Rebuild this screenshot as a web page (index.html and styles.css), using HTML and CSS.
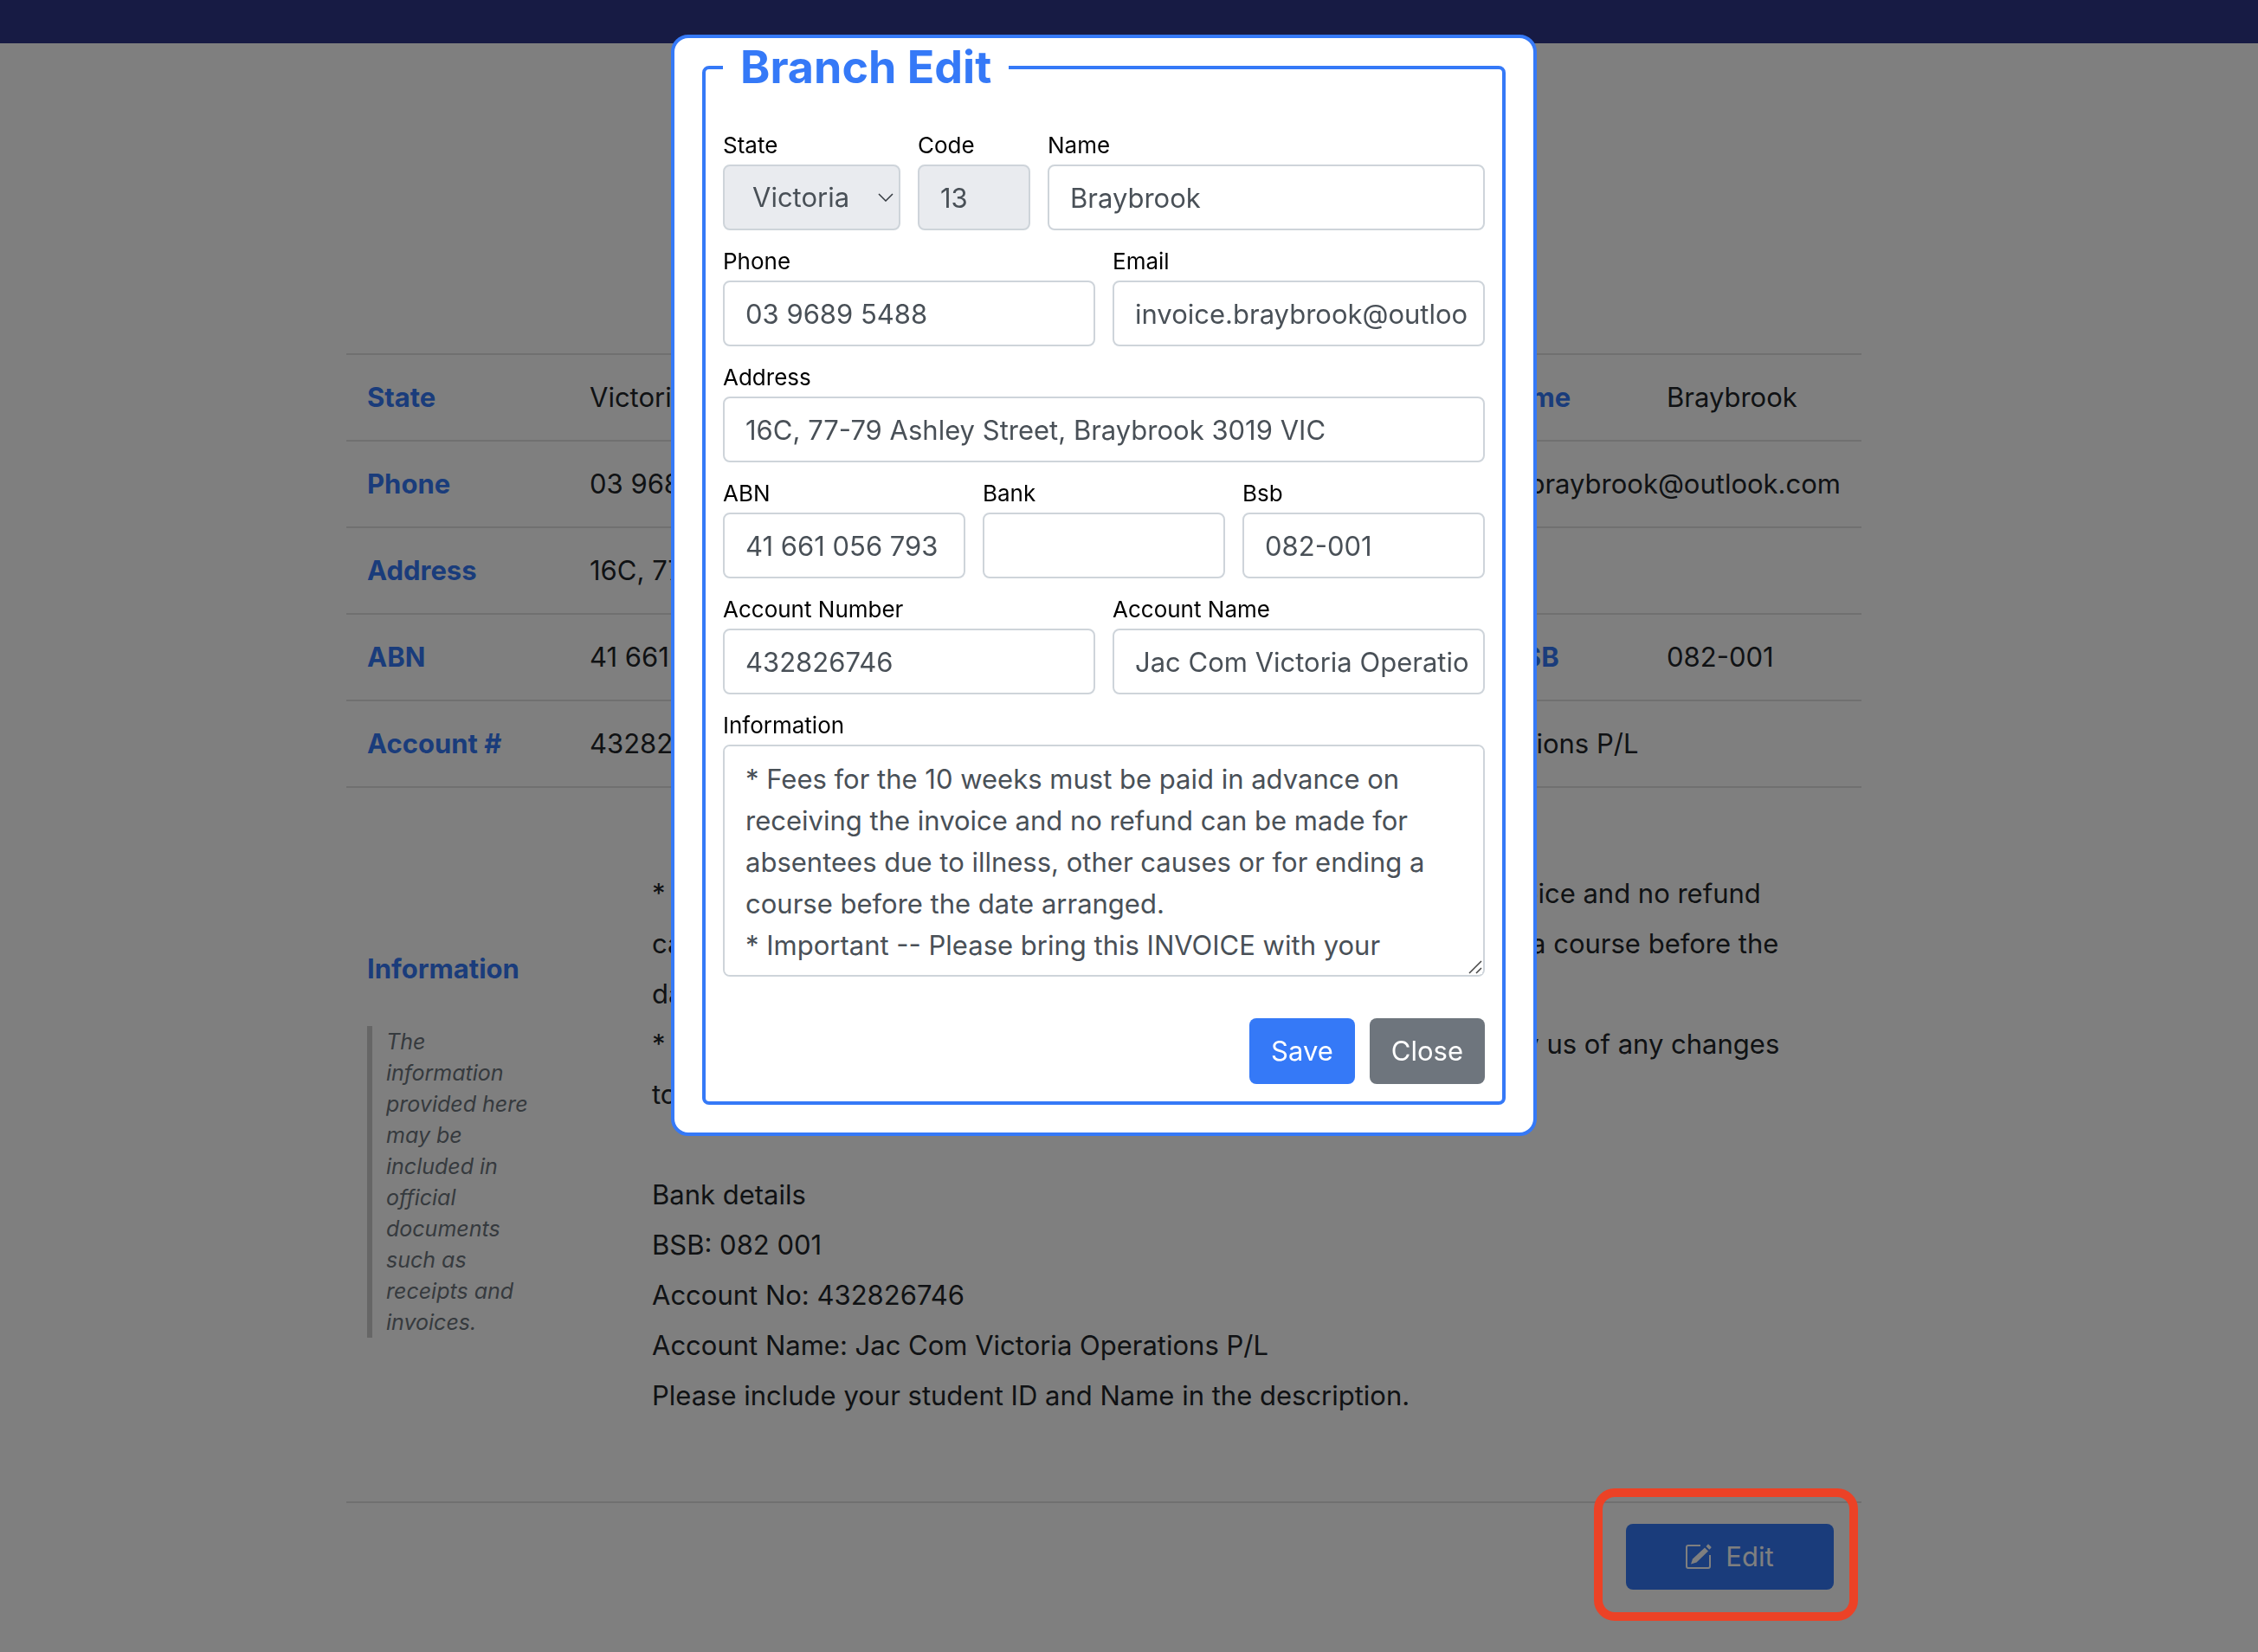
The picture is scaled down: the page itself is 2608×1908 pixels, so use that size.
FILE: index.html
```html
<!DOCTYPE html>
<html lang="en">
<head>
<meta charset="utf-8">
<title>Branch Edit</title>
<meta name="viewport" content="width=device-width, initial-scale=1">
<link rel="stylesheet" href="styles.css">
</head>
<body>
<header class="topbar"></header>
<main class="page">
  <div class="details">
    <table class="branch">
      <colgroup>
        <col class="col-label"><col class="col-wide"><col class="col-label"><col class="col-code"><col class="col-name"><col>
      </colgroup>
      <tbody>
        <tr><th scope="row">State</th><td>Victoria</td><th scope="row">Code</th><td>13</td><th scope="row" class="center">Name</th><td>Braybrook</td></tr>
        <tr><th scope="row">Phone</th><td>03 9689 5488</td><th scope="row">Email</th><td colspan="3" class="end">invoice.braybrook@outlook.com</td></tr>
        <tr><th scope="row">Address</th><td colspan="5">16C, 77-79 Ashley Street, Braybrook 3019 VIC</td></tr>
        <tr><th scope="row">ABN</th><td>41 661 056 793</td><th scope="row">Bank</th><td></td><th scope="row" class="center">BSB</th><td>082-001</td></tr>
        <tr><th scope="row">Account #</th><td>432826746</td><th scope="row">Account Name</th><td colspan="3">Jac Com Victoria Operations P/L</td></tr>
        <tr class="info-row">
          <th scope="row">Information
            <blockquote class="note">The information provided here may be included in official documents such as receipts and invoices.</blockquote>
          </th>
          <td colspan="5"><p class="info">* Fees for the 10 weeks must be paid in advance on receiving the invoice and no refund
can be made for absentees due to illness, other causes or for ending a course before the
date arranged.
* Important -- Please bring this INVOICE with your payment and notify us of any changes
to your details.

Bank details
BSB: 082 001
Account No: 432826746
Account Name: Jac Com Victoria Operations P/L
Please include your student ID and Name in the description.</p></td>
        </tr>
      </tbody>
    </table>
    <div class="actions">
      <div class="marked">
        <button type="button" class="btn btn-primary btn-edit">
          <svg class="icon" viewBox="0 0 30 30" aria-hidden="true"><path d="M17 2H3Q1 2 1 4V26Q1 28 3 28H26Q28 28 28 26V13" fill="none" stroke="currentColor" stroke-width="2"/><path d="M22 4.500L26 8.500L12.500 21.500L6 23.500L8 17.500Z" fill="currentColor"/><path d="M23.500 3L25.500 .8Q26 .3 26.500 .8L29.300 3.600Q29.800 4.200 29.300 4.700L27.300 6.800Z" fill="currentColor"/></svg>
          Edit
        </button>
        <span class="marker"></span>
      </div>
    </div>
  </div>
</main>
<div class="backdrop">
  <dialog open class="modal" aria-labelledby="modal-title">
    <form>
      <fieldset class="panel">
        <legend id="modal-title">Branch Edit</legend>
        <div class="rows">
          <div class="row row-head">
            <div class="field"><label for="state">State</label>
              <div class="select">
                <select id="state" disabled><option>Victoria</option></select>
                <svg class="chevron" viewBox="0 0 18 10" aria-hidden="true"><path d="M1 1L9 9L17 1" fill="none" stroke="currentColor" stroke-width="1.500"/></svg>
              </div>
            </div>
            <div class="field"><label for="code">Code</label><input id="code" type="text" value="13" disabled></div>
            <div class="field"><label for="name">Name</label><input id="name" type="text" value="Braybrook"></div>
          </div>
          <div class="row row-2">
            <div class="field"><label for="phone">Phone</label><input id="phone" type="text" value="03 9689 5488"></div>
            <div class="field"><label for="email">Email</label><input id="email" type="text" value="invoice.braybrook@outlook.com"></div>
          </div>
          <div class="row">
            <div class="field"><label for="address">Address</label><input id="address" type="text" value="16C, 77-79 Ashley Street, Braybrook 3019 VIC"></div>
          </div>
          <div class="row row-3">
            <div class="field"><label for="abn">ABN</label><input id="abn" type="text" value="41 661 056 793"></div>
            <div class="field"><label for="bank">Bank</label><input id="bank" type="text" value=""></div>
            <div class="field"><label for="bsb">Bsb</label><input id="bsb" type="text" value="082-001"></div>
          </div>
          <div class="row row-2">
            <div class="field"><label for="accno">Account Number</label><input id="accno" type="text" value="432826746"></div>
            <div class="field"><label for="accname">Account Name</label><input id="accname" type="text" value="Jac Com Victoria Operations P/L"></div>
          </div>
          <div class="row">
            <div class="field"><label for="info">Information</label>
              <div class="area">
                <textarea id="info" rows="5">* Fees for the 10 weeks must be paid in advance on receiving the invoice and no refund can be made for absentees due to illness, other causes or for ending a course before the date arranged.
* Important -- Please bring this INVOICE with your payment and notify us of any changes to your details.</textarea>
                <svg class="grip" viewBox="0 0 16 16" aria-hidden="true"><path d="M1 15L15 1M9 15L15 9" fill="none" stroke="currentColor" stroke-width="1.500"/></svg>
              </div>
            </div>
          </div>
        </div>
        <div class="buttons">
          <button type="button" class="btn btn-primary">Save</button>
          <button type="button" class="btn btn-secondary">Close</button>
        </div>
      </fieldset>
    </form>
  </dialog>
</div>
</body>
</html>
```
FILE: styles.css
```css
:root {
  --blue: #3579f7;
  --gray: #6e757d;
  --text: #212529;
  --line: #e0e0e0;
  --gutter: 58px;
}

* { box-sizing: border-box; }

body {
  margin: 0;
  min-height: 100vh;
  background: #fff;
  color: var(--text);
  font: 31px/48px Inter, "Liberation Sans", sans-serif;
}

.topbar { height: 50px; background: #2e3788; }

.page { padding: 358px var(--gutter) 0 0; }

.details { max-width: 1750px; margin: 0 auto; }

/* Branch details */
.branch {
  width: 100%;
  table-layout: fixed;
  border-collapse: separate;
  border-spacing: 0;
  border-top: 2px solid var(--line);
}
.col-label { width: 257px; }
.col-wide { width: 477px; }
.col-code { width: 248px; }
.col-name { width: 262px; }

.branch th,
.branch td {
  padding: 25px 24px;
  border-bottom: 2px solid var(--line);
  text-align: left;
  vertical-align: middle;
  white-space: nowrap;
}
.branch th { color: var(--blue); font-weight: 700; }
.branch .center { text-align: center; }
.branch .end { text-align: right; }

.note {
  margin: 42px 0 4px;
  padding: 0 0 0 16px;
  border-left: 6px solid #ccc;
  color: #6c757d;
  font: italic 400 25px/36px Inter, "Liberation Sans", sans-serif;
  white-space: normal;
}

.branch .info-row td { padding: 93px 24px 93px 96px; }
.info {
  margin: 0;
  line-height: 58px;
  white-space: pre;
}

.actions {
  display: flex;
  justify-content: flex-end;
  padding: 24px 32px;
}
.marked { position: relative; }
.marker {
  position: absolute;
  inset: -41px -28px -36px -37px;
  z-index: 2;
  border: 10px solid #ec4226;
  border-radius: 24px;
  pointer-events: none;
}

/* Buttons */
.btn {
  height: 76px;
  padding: 0 25px;
  border: 0;
  border-radius: 8px;
  color: #fff;
  font: inherit;
}
.btn-primary { background: var(--blue); }
.btn-secondary { background: var(--gray); }
.btn-edit {
  display: flex;
  align-items: center;
  justify-content: center;
  gap: 16px;
  width: 240px;
}
.icon { width: 30px; height: 30px; }

/* Modal */
.backdrop {
  position: fixed;
  inset: 0;
  z-index: 1;
  padding: 40px var(--gutter) 0 0;
  background: rgba(0, 0, 0, .5);
}
.modal {
  position: static;
  width: 1000px;
  max-width: 100%;
  margin: 0 auto;
  padding: 0 32px 32px;
  border: 4px solid var(--blue);
  border-radius: 20px;
  background: #fff;
  color: #000;
}
.panel {
  min-width: 0;
  margin: 0;
  padding: 38px 20px 20px;
  border: 4px solid var(--blue);
  border-radius: 8px;
}
.panel legend {
  padding: 0 20px;
  color: var(--blue);
  font-size: 52px;
  font-weight: 700;
  line-height: 68px;
}
.rows { display: grid; gap: 18px; }
.row { display: grid; gap: 20px; }
.row-head { grid-template-columns: 205px 130px 1fr; }
.row-2 { grid-template-columns: 1fr 1fr; }
.row-3 { grid-template-columns: 1fr 1fr 1fr; }
.field { min-width: 0; }
.field label {
  display: block;
  margin-bottom: 4px;
  font-size: 26px;
  line-height: 36px;
}
.field input,
.field select,
.field textarea {
  display: block;
  width: 100%;
  height: 76px;
  margin: 0;
  padding: 12px 18px 12px 24px;
  border: 2px solid #ced4da;
  border-radius: 8px;
  background: #fff;
  color: #495057;
  font: inherit;
  opacity: 1;
}
.field textarea {
  height: auto;
  padding: 14px 24px 10px;
  resize: vertical;
  scrollbar-width: none;
}
.field select {
  appearance: none;
  padding: 12px 32px;
}
.field input:disabled,
.field select:disabled { background: #e9ebef; }
.select,
.area { position: relative; }
.chevron {
  position: absolute;
  top: 33px;
  right: 8px;
  width: 18px;
  height: 10px;
  color: #343a40;
}
.grip {
  position: absolute;
  right: 3px;
  bottom: 3px;
  width: 16px;
  height: 16px;
  background: #fff;
  color: #444;
  pointer-events: none;
}
.buttons {
  display: flex;
  justify-content: flex-end;
  gap: 17px;
  padding-top: 48px;
}
```
